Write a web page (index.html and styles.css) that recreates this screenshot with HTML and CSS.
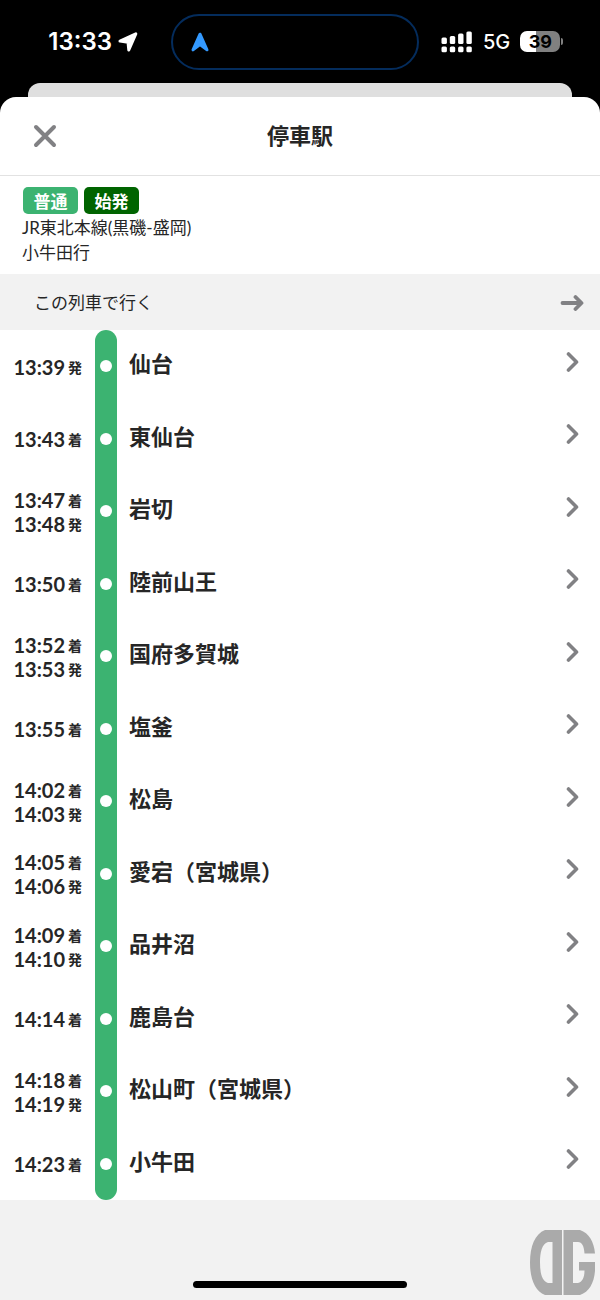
FILE: index.html
```
<!DOCTYPE html>
<html lang="ja">
<head>
    <meta charset="UTF-8">
    <meta name="viewport" content="width=device-width, initial-scale=1.0">
    <title>停車駅</title>
    <link rel="stylesheet" href="styles.css">
</head>
<body>
    <svg class="defs" width="0" height="0" aria-hidden="true">
        <symbol id="chevron" viewBox="0 0 14 22">
            <path d="M2.5 3 L10.5 11 L2.5 19" fill="none" stroke="#818184" stroke-width="3.6" stroke-linecap="round" stroke-linejoin="round"/>
        </symbol>
    </svg>

    <div class="status">
        <div class="status-left">
            <span class="clock">13:33</span>
            <svg width="20" height="20" viewBox="0 0 20 20" aria-hidden="true">
                <path d="M2 9 L17.800 1.800 L10.800 18 L10 10.200 Z" fill="#fff" stroke="#fff" stroke-width="3" stroke-linejoin="round"/>
            </svg>
        </div>
        <div class="island">
            <svg width="18" height="20" viewBox="0 0 18 20" aria-hidden="true">
                <path d="M9 2.200 L16 17.800 L9 12.500 L2 17.800 Z" fill="#3399ff" stroke="#3399ff" stroke-width="3" stroke-linejoin="round"/>
            </svg>
        </div>
        <div class="status-right">
            <svg width="32" height="22" viewBox="0 0 32 22" fill="#fff" aria-hidden="true">
                <rect x="0.5" y="6.5" width="5.4" height="6.5" rx="1.5"/>
                <rect x="8.8" y="5" width="5.4" height="8" rx="1.5"/>
                <rect x="17.1" y="2.5" width="5.4" height="10.5" rx="1.5"/>
                <rect x="25.4" y="0.5" width="5.4" height="12.5" rx="1.5"/>
                <rect x="0.5" y="15.5" width="5.4" height="5.7" rx="1.5"/>
                <rect x="8.8" y="15.5" width="5.4" height="5.7" rx="1.5"/>
                <rect x="17.1" y="15.5" width="5.4" height="5.7" rx="1.5"/>
                <rect x="25.4" y="15.5" width="5.4" height="5.7" rx="1.5"/>
            </svg>
            <span class="network">5G</span>
            <span class="battery">39</span>
        </div>
    </div>

    <div class="back-sheet"></div>

    <div class="sheet">
        <header class="header">
            <button type="button" class="close" aria-label="閉じる">
                <svg width="24" height="24" viewBox="0 0 24 24" aria-hidden="true">
                    <path d="M3 3 L21 21 M21 3 L3 21" stroke="#818184" stroke-width="4" stroke-linecap="round"/>
                </svg>
            </button>
            <h1>停車駅</h1>
        </header>

        <section class="info">
            <div class="badges">
                <span class="badge">普通</span>
                <span class="badge badge-start">始発</span>
            </div>
            <p>JR東北本線(黒磯-盛岡)</p>
            <p>小牛田行</p>
        </section>

        <a class="ride" href="#">
            <span>この列車で行く</span>
            <svg width="24" height="18" viewBox="0 0 24 18" aria-hidden="true">
                <path d="M2.5 10 H21 M15.5 4 L21.5 10 L15.5 16" fill="none" stroke="#818184" stroke-width="3.8" stroke-linecap="round" stroke-linejoin="round"/>
            </svg>
        </a>

        <div class="timeline">
            <div class="rail"></div>
            <ol class="stops">
                <li><a class="stop" href="#">
                    <span class="times"><time>13:39 <small>発</small></time></span>
                    <span class="dot"></span>
                    <span class="name">仙台</span>
                    <svg class="chevron"><use href="#chevron"/></svg>
                </a></li>
                <li><a class="stop" href="#">
                    <span class="times"><time>13:43 <small>着</small></time></span>
                    <span class="dot"></span>
                    <span class="name">東仙台</span>
                    <svg class="chevron"><use href="#chevron"/></svg>
                </a></li>
                <li><a class="stop" href="#">
                    <span class="times"><time>13:47 <small>着</small></time><time>13:48 <small>発</small></time></span>
                    <span class="dot"></span>
                    <span class="name">岩切</span>
                    <svg class="chevron"><use href="#chevron"/></svg>
                </a></li>
                <li><a class="stop" href="#">
                    <span class="times"><time>13:50 <small>着</small></time></span>
                    <span class="dot"></span>
                    <span class="name">陸前山王</span>
                    <svg class="chevron"><use href="#chevron"/></svg>
                </a></li>
                <li><a class="stop" href="#">
                    <span class="times"><time>13:52 <small>着</small></time><time>13:53 <small>発</small></time></span>
                    <span class="dot"></span>
                    <span class="name">国府多賀城</span>
                    <svg class="chevron"><use href="#chevron"/></svg>
                </a></li>
                <li><a class="stop" href="#">
                    <span class="times"><time>13:55 <small>着</small></time></span>
                    <span class="dot"></span>
                    <span class="name">塩釜</span>
                    <svg class="chevron"><use href="#chevron"/></svg>
                </a></li>
                <li><a class="stop" href="#">
                    <span class="times"><time>14:02 <small>着</small></time><time>14:03 <small>発</small></time></span>
                    <span class="dot"></span>
                    <span class="name">松島</span>
                    <svg class="chevron"><use href="#chevron"/></svg>
                </a></li>
                <li><a class="stop" href="#">
                    <span class="times"><time>14:05 <small>着</small></time><time>14:06 <small>発</small></time></span>
                    <span class="dot"></span>
                    <span class="name">愛宕（宮城県）</span>
                    <svg class="chevron"><use href="#chevron"/></svg>
                </a></li>
                <li><a class="stop" href="#">
                    <span class="times"><time>14:09 <small>着</small></time><time>14:10 <small>発</small></time></span>
                    <span class="dot"></span>
                    <span class="name">品井沼</span>
                    <svg class="chevron"><use href="#chevron"/></svg>
                </a></li>
                <li><a class="stop" href="#">
                    <span class="times"><time>14:14 <small>着</small></time></span>
                    <span class="dot"></span>
                    <span class="name">鹿島台</span>
                    <svg class="chevron"><use href="#chevron"/></svg>
                </a></li>
                <li><a class="stop" href="#">
                    <span class="times"><time>14:18 <small>着</small></time><time>14:19 <small>発</small></time></span>
                    <span class="dot"></span>
                    <span class="name">松山町（宮城県）</span>
                    <svg class="chevron"><use href="#chevron"/></svg>
                </a></li>
                <li><a class="stop" href="#">
                    <span class="times"><time>14:23 <small>着</small></time></span>
                    <span class="dot"></span>
                    <span class="name">小牛田</span>
                    <svg class="chevron"><use href="#chevron"/></svg>
                </a></li>
            </ol>
        </div>

        <footer class="footer">
            <div class="home-bar"></div>
            <svg class="logo" width="66" height="66" viewBox="0 0 66 66" fill="#aaa" aria-hidden="true">
                <path fill-rule="evenodd" d="M32 0 V65 H15 C5 61 0 49 0 32.500 C0 16 5 4 15 0 Z M22.500 12 H18 C12 14 10 22 10 32.500 C10 43 12 51 18 53 H22.500 Z"/>
                <path d="M33.500 0 H50 C59 3 64 12 65 23.500 H54.500 C54 16 52 12 48 12 H43 V53 H48 C52 52 54.500 48 54.500 40.500 H49 V32 H65 V41 C64 53 59 62 50 65 H33.500 Z"/>
            </svg>
        </footer>
    </div>
</body>
</html>
```

FILE: styles.css
```
*{
    box-sizing:border-box;
}
body{
    margin:0;
    min-height:100vh;
    display:flex;
    flex-direction:column;
    background-color:#000;
    color:#262626;
    font-family:"Noto Sans CJK JP", sans-serif;
}
h1, p, ol{
    margin:0;
    padding:0;
}
a{
    color:inherit;
    text-decoration:none;
}
.defs{
    position:absolute;
}

/* status bar */
.status{
    display:grid;
    grid-template-columns:17fr 248px 18fr;
    align-items:center;
    height:83px;
    color:#fff;
    font-family:Inter, sans-serif;
}
.status-left{
    display:flex;
    align-items:center;
    justify-content:flex-end;
    gap:6px;
    padding-right:33px;
}
.clock{
    font-size:24px;
    font-weight:600;
}
.island{
    display:flex;
    align-items:center;
    height:56px;
    padding-left:18px;
    border:2px solid #042c5c;
    border-radius:28px;
}
.status-right{
    display:flex;
    align-items:center;
    gap:10px;
    padding-left:22px;
}
.network{
    font-size:20px;
    font-weight:500;
}
.battery{
    position:relative;
    width:40px;
    height:21px;
    border-radius:7px;
    background:linear-gradient(to right, #fff 39%, #808080 39%);
    color:#000;
    font-size:18px;
    font-weight:700;
    line-height:21px;
    text-align:center;
}
.battery::after{
    content:"";
    position:absolute;
    left:41px;
    top:7px;
    width:2px;
    height:7px;
    border-radius:0 2px 2px 0;
    background-color:#808080;
}

/* sheets */
.back-sheet{
    height:14px;
    margin:0 28px;
    border-radius:12px 12px 0 0;
    background-color:#dfdfdf;
}
.sheet{
    flex:1;
    display:flex;
    flex-direction:column;
    border-radius:16px 16px 0 0;
    background-color:#fff;
}
.header{
    display:grid;
    grid-template-columns:90px 1fr 90px;
    align-items:center;
    height:79px;
    border-bottom:1px solid #e2e2e2;
}
.close{
    display:flex;
    justify-content:center;
    padding:8px;
    border:none;
    background:none;
    cursor:pointer;
}
h1{
    padding-bottom:4px;
    font-size:22px;
    font-weight:700;
    text-align:center;
}

/* train info */
.info{
    padding:11px 22px 9px;
    font-family:Lato, "Noto Sans CJK JP", sans-serif;
    font-size:17px;
    line-height:25px;
}
.badges{
    display:flex;
    gap:6px;
    margin-bottom:1px;
    padding-left:1px;
}
.badge{
    width:55px;
    border-radius:5px;
    background-color:#3cb371;
    color:#fff;
    font-family:"Noto Sans CJK JP", sans-serif;
    font-size:17px;
    font-weight:700;
    line-height:27px;
    text-align:center;
}
.badge-start{
    background-color:#006400;
}
.ride{
    display:flex;
    align-items:center;
    justify-content:space-between;
    height:56px;
    padding:0 16px 0 34px;
    background-color:#f2f2f2;
    font-size:17px;
}
.ride span{
    padding-bottom:2px;
}

/* stops */
.timeline{
    flex:1;
    display:grid;
    grid-template-columns:95px 22px 1fr;
}
.rail{
    grid-area:1 / 2;
    border-radius:11px;
    background-color:#3cb371;
}
.stops{
    grid-area:1 / 1 / 2 / 4;
    display:grid;
    grid-auto-rows:1fr;
    list-style:none;
}
.stop{
    display:grid;
    grid-template-columns:82px 47px 1fr 14px;
    align-items:center;
    height:100%;
    padding-right:20px;
}
.times{
    padding-top:1px;
    font-family:Lato, "Noto Sans CJK JP", sans-serif;
    font-size:20px;
    font-weight:700;
}
.times time{
    display:flex;
    justify-content:flex-end;
    align-items:center;
    gap:3px;
    line-height:24px;
}
.times small{
    padding-top:1px;
    font-family:"Noto Sans CJK JP", sans-serif;
    font-size:14px;
    line-height:23px;
}
.dot{
    width:12px;
    height:12px;
    margin-left:18px;
    border-radius:50%;
    background-color:#fff;
}
.name{
    padding-bottom:8px;
    font-size:22px;
    font-weight:700;
}
.chevron{
    width:14px;
    height:22px;
    margin-bottom:9px;
}

/* bottom */
.footer{
    position:relative;
    display:flex;
    align-items:flex-end;
    justify-content:center;
    height:100px;
    padding-bottom:12px;
    background-color:#f2f2f2;
}
.home-bar{
    width:214px;
    height:7px;
    border-radius:4px;
    background-color:#000;
}
.logo{
    position:absolute;
    right:4px;
    bottom:4px;
}
```
